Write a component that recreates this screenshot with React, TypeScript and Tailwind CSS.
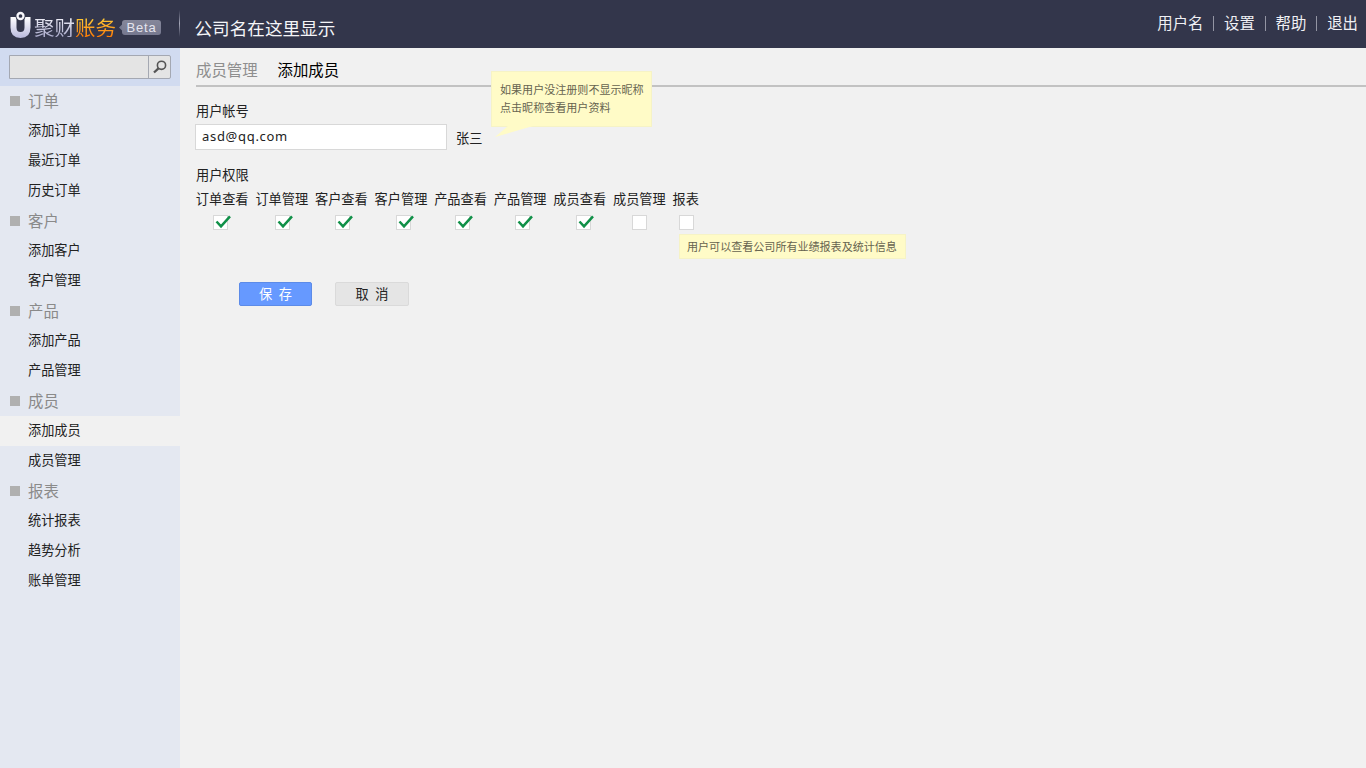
import React from "react";

type Group = { title: string; items: string[] };

const groups: Group[] = [
  { title: "订单", items: ["添加订单", "最近订单", "历史订单"] },
  { title: "客户", items: ["添加客户", "客户管理"] },
  { title: "产品", items: ["添加产品", "产品管理"] },
  { title: "成员", items: ["添加成员", "成员管理"] },
  { title: "报表", items: ["统计报表", "趋势分析", "账单管理"] },
];

const permissions = [
  { label: "订单查看", checked: true, offset: "ml-[17px]" },
  { label: "订单管理", checked: true, offset: "ml-[20px]" },
  { label: "客户查看", checked: true, offset: "ml-[20.500px]" },
  { label: "客户管理", checked: true, offset: "ml-[21.500px]" },
  { label: "产品查看", checked: true, offset: "ml-[20.500px]" },
  { label: "产品管理", checked: true, offset: "ml-[21.500px]" },
  { label: "成员查看", checked: true, offset: "ml-[22.500px]" },
  { label: "成员管理", checked: false, offset: "ml-[19px]" },
  { label: "报表", checked: false, offset: "ml-[6.500px]" },
];

function Logo() {
  return (
    <svg className="h-[28px] w-[22px] shrink-0" viewBox="0 0 22 28">
      <defs>
        <linearGradient id="mark" x1="0" y1="0" x2="0" y2="1">
          <stop offset="0" stopColor="#ffffff" />
          <stop offset="1" stopColor="#b9b9dd" />
        </linearGradient>
      </defs>
      <path
        d="M0.5 6H6.500V16.5Q6.500 21 10.500 21Q14.500 21 14.500 16.5V6H20.500V16.500Q20.500 27 10.500 27Q0.500 27 0.500 16.500Z"
        fill="url(#mark)"
      />
      <circle cx="10.500" cy="5" r="5" fill="#33364b" />
      <circle cx="10.500" cy="5" r="3" fill="#33364b" stroke="#f8f8fc" strokeWidth="2.300" />
    </svg>
  );
}

function Checkbox({ checked, offset }: { checked: boolean; offset: string }) {
  return (
    <span className={`relative mt-[5px] block h-[15px] w-[15px] border border-[#d8d8d8] bg-white ${offset}`}>
      {checked && (
        <svg className="absolute -top-px left-px h-[14px] w-[17px]" viewBox="0 0 17 14">
          <path d="M1.500 6.500L6 11.300L15 1.300" fill="none" stroke="#109048" strokeWidth="2.500" />
        </svg>
      )}
    </span>
  );
}

export default function App() {
  return (
    <div className="flex h-[768px] w-[1366px] flex-col overflow-hidden bg-[#f1f1f1] font-['Noto_Sans_CJK_SC',sans-serif] text-[13.2px] text-[#222]">
      <header className="flex h-12 shrink-0 bg-[#33364b]">
        <div className="flex w-[180px] shrink-0 pl-[10px] pt-[11px]">
          <Logo />
          <div className="ml-[2px] flex h-[32px] items-center text-[20.5px] leading-none font-normal whitespace-nowrap">
            <span className="bg-linear-to-b from-[#f4f4fb] to-[#aaaacb] bg-clip-text text-transparent">聚财</span>
            <span className="bg-linear-to-b from-[#ffcf38] to-[#ff7a00] bg-clip-text text-transparent">账务</span>
          </div>
          <svg className="mt-[12px] ml-[3px] h-[9px] w-[3px]" viewBox="0 0 3 9">
            <path d="M3 1.500L0 4.500L3 7.500Z" fill="#777b91" />
          </svg>
          <span className="mt-[9px] flex h-[15px] w-[39px] items-center justify-center rounded-[3px] bg-linear-to-b from-[#85879a] to-[#777990] font-['Liberation_Sans',sans-serif] text-[13px] leading-none tracking-[0.8px] text-[#e5e5ee]">
            Beta
          </span>
        </div>
        <div className="mt-[10px] -ml-px h-[27px] w-px bg-linear-to-b from-[#33364b] via-[#a5a7b8] to-[#33364b]" />
        <div className="ml-[14.500px] flex-1 pt-[14px] text-[17.600px] leading-[28px] text-[#f5f5f8]">公司名在这里显示</div>
        <nav className="flex h-[46px] items-center pr-[8px] text-[15.400px] text-[#f0f0f4]">
          <span>用户名</span>
          <i className="mr-[10px] ml-[9.500px] h-[15px] w-px bg-[#9395a3]" />
          <span>设置</span>
          <i className="mr-[9.800px] ml-[10px] h-[15px] w-px bg-[#9395a3]" />
          <span>帮助</span>
          <i className="mr-[9.800px] ml-[10px] h-[15px] w-px bg-[#9395a3]" />
          <span>退出</span>
        </nav>
      </header>

      <div className="flex min-h-0 flex-1">
        <aside className="w-[180px] shrink-0 bg-[#e4e8f1]">
          <div className="h-[38px] bg-[#d1dbf0] pt-[7px] pl-[9px]">
            <div className="flex h-[24px] w-[162px] rounded-r-[2px] border border-[#a4a8b2] bg-[#e4e4e4]">
              <input className="w-[138px] outline-none" aria-label="搜索" />
              <button className="flex flex-1 items-center justify-center border-l border-[#a4a8b2]" aria-label="搜索">
                <svg className="h-[14px] w-[14px]" viewBox="0 0 14 14" fill="none" stroke="#555">
                  <circle cx="8.500" cy="5.300" r="4.100" strokeWidth="1.600" />
                  <path d="M5.500 8.300L1 12.500" strokeWidth="2.300" />
                </svg>
              </button>
            </div>
          </div>
          {groups.map((g) => (
            <div key={g.title}>
              <div className="flex h-[30px] items-center pl-[10px] text-[15.400px] text-[#8a8a8a]">
                <i className="mr-[8px] h-[10px] w-[10px] bg-[#b0b0b0]" />
                {g.title}
              </div>
              {g.items.map((item) => (
                <div
                  key={item}
                  className={`h-[30px] pl-[28px] leading-[28px] ${item === "添加成员" ? "bg-[#f1f1f1]" : ""}`}
                >
                  {item}
                </div>
              ))}
            </div>
          ))}
        </aside>

        <main className="flex-1 pl-[15px]">
          <div className="relative ml-px flex h-[39px] items-center gap-[20px] border-b-2 border-[#c2c2c2] text-[15.400px]">
            <span className="mt-[7px] text-[#8e8e8e]">成员管理</span>
            <span className="mt-[7px] text-black">添加成员</span>
            <div className="absolute top-[23px] left-[295px] h-[56px] w-[161px] border border-[#f6f3c6] bg-[#fffbc7] px-[8px] pt-[8px] text-[11.050px] leading-[18px] whitespace-nowrap text-[#66634f]">
              如果用户没注册则不显示昵称
              <br />
              点击昵称查看用户资料
              <svg className="absolute top-[54px] left-[3px] h-[12px] w-[38px]" viewBox="0 0 38 12">
                <path d="M13 0H38L0 11Z" fill="#fffbc7" />
              </svg>
            </div>
          </div>

          <div className="mt-[13px] ml-px h-[22px] leading-[22px]">用户帐号</div>
          <div className="mt-[2px] flex">
            <input
              className="h-[26px] w-[252px] border border-[#d8d8d8] bg-white px-[6px] pb-[2px] font-['Noto_Sans','Noto_Sans_CJK_SC',sans-serif] text-[13px] tracking-[0.7px] outline-none"
              defaultValue="asd@qq.com"
            />
            <span className="mt-[3px] ml-[9px] leading-[22px]">张三</span>
          </div>

          <div className="mt-[14px] ml-px h-[22px] leading-[22px]">用户权限</div>
          <div className="mt-[2px] ml-[0.800px] flex">
            {permissions.map((p) => (
              <label key={p.label} className="w-[59.600px] leading-[22px] whitespace-nowrap">
                <span className="block h-[22px]">{p.label}</span>
                <Checkbox checked={p.checked} offset={p.offset} />
              </label>
            ))}
          </div>
          <div className="mt-[4px] ml-[484px] h-[25px] w-[227px] border border-[#f6f3c6] bg-[#fffbc7] pl-[7px] text-[11.050px] leading-[23px] text-[#66634f]">
            用户可以查看公司所有业绩报表及统计信息
          </div>

          <div className="mt-[23px] ml-[44px] flex gap-[23px]">
            <button className="h-[24px] w-[73px] rounded-[2px] border border-[#5c8be8] bg-[#6699ff] text-[13.200px] leading-[22px] text-white">
              保&ensp;存
            </button>
            <button className="h-[24px] w-[74px] rounded-[2px] border border-[#dadada] bg-[#e5e5e5] text-[13.200px] leading-[22px]">
              取&ensp;消
            </button>
          </div>
        </main>
      </div>
    </div>
  );
}
